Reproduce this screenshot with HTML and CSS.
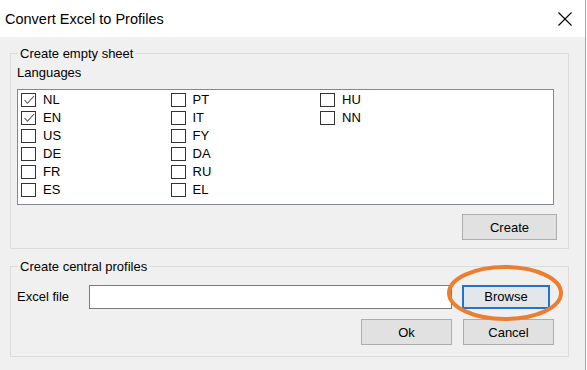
FILE: index.html
```html
<!DOCTYPE html>
<html>
<head>
<meta charset="utf-8">
<title>Convert Excel to Profiles</title>
<link rel="stylesheet" href="styles.css">
</head>
<body>
<div class="window">
  <div class="titlebar">
    <span class="title">Convert Excel to Profiles</span>
    <svg class="close" width="14" height="14" viewBox="0 0 14 14"><path d="M0.5 0.5 L13.5 13.5 M13.5 0.5 L0.5 13.5" stroke="#000" stroke-width="1.1" fill="none"/></svg>
  </div>
  <div class="client">
    <fieldset class="group group-empty">
      <legend class="legend">Create empty sheet</legend>
      <div class="label-languages">Languages</div>
      <div class="listbox">
        <div class="check-grid">
          <div class="item"><span class="box"><svg width="12" height="12" viewBox="0 0 12 12"><path d="M1.5 6 L4.5 9.3 L11 2" stroke="#555" stroke-width="1.1" fill="none"/></svg></span><span class="text">NL</span></div>
          <div class="item"><span class="box"><svg width="12" height="12" viewBox="0 0 12 12"><path d="M1.5 6 L4.5 9.3 L11 2" stroke="#555" stroke-width="1.1" fill="none"/></svg></span><span class="text">EN</span></div>
          <div class="item"><span class="box"></span><span class="text">US</span></div>
          <div class="item"><span class="box"></span><span class="text">DE</span></div>
          <div class="item"><span class="box"></span><span class="text">FR</span></div>
          <div class="item"><span class="box"></span><span class="text">ES</span></div>
          <div class="item"><span class="box"></span><span class="text">PT</span></div>
          <div class="item"><span class="box"></span><span class="text">IT</span></div>
          <div class="item"><span class="box"></span><span class="text">FY</span></div>
          <div class="item"><span class="box"></span><span class="text">DA</span></div>
          <div class="item"><span class="box"></span><span class="text">RU</span></div>
          <div class="item"><span class="box"></span><span class="text">EL</span></div>
          <div class="item"><span class="box"></span><span class="text">HU</span></div>
          <div class="item"><span class="box"></span><span class="text">NN</span></div>
        </div>
      </div>
      <div class="button-row">
        <button class="btn btn-create">Create</button>
      </div>
    </fieldset>
    <fieldset class="group group-central">
      <legend class="legend">Create central profiles</legend>
      <div class="file-row">
        <span class="file-label">Excel file</span>
        <span class="file-input"></span>
        <button class="btn btn-browse">Browse</button>
      </div>
      <div class="action-row">
        <button class="btn btn-ok">Ok</button>
        <button class="btn btn-cancel">Cancel</button>
      </div>
    </fieldset>
  </div>
  <svg class="highlight" width="130" height="70" viewBox="0 0 130 70"><ellipse cx="65" cy="35" rx="56" ry="26" fill="none" stroke="#ee7e2f" stroke-width="4"/></svg>
</div>
</body>
</html>
```

FILE: styles.css
```css
* { box-sizing: border-box; }
html, body { margin: 0; padding: 0; }
body {
  background: #ffffff;
  width: 587px;
  height: 370px;
  overflow: hidden;
  font-family: "Liberation Sans", Arial, sans-serif;
  font-size: 13px;
  color: #000;
}
.window {
  position: relative;
  width: 586px;
  height: 370px;
  border-right: 1px solid #a8a8a8;
  display: flex;
  flex-direction: column;
}
.titlebar {
  height: 37px;
  background: #fff;
  display: flex;
  align-items: center;
  padding: 0 13px 0 5px;
  flex: none;
}
.title {
  font-size: 14.5px;
}
.close {
  margin-left: auto;
  margin-top: 1px;
}
.client {
  flex: 1;
  background: #f0f0f0;
  padding: 9px 0 0 10px;
}
.group {
  width: 559px;
  margin: 0;
  border: 1px solid #dcdcdc;
  padding: 0 11px 0 6px;
}
.legend {
  padding: 0 2px;
  margin-left: 1px;
  line-height: 15px;
}
.group-empty {
  padding-top: 4px;
  padding-bottom: 8px;
}
.label-languages {
  line-height: 15px;
}
.listbox {
  margin-top: 9px;
  width: 537px;
  height: 116px;
  background: #fff;
  border: 1px solid #828790;
  padding: 3px 0 0 3px;
}
.check-grid {
  display: grid;
  grid-auto-flow: column;
  grid-template-rows: repeat(6, 18px);
  grid-auto-columns: 149.5px;
}
.item {
  display: flex;
  align-items: flex-start;
  line-height: 14px;
}
.box {
  width: 15px;
  height: 14px;
  border: 1px solid #333;
  background: #fff;
  display: flex;
  align-items: center;
  justify-content: center;
  flex: none;
}
.box svg { display: block; }
.text {
  margin-left: 7px;
}
.button-row {
  display: flex;
  justify-content: flex-end;
  margin-top: 9px;
}
.btn {
  font-family: inherit;
  font-size: 13px;
  color: #000;
  background: #e1e1e1;
  border: 1px solid #adadad;
  padding: 0;
  margin: 0;
  height: 26px;
}
.btn-create {
  width: 95px;
}
.group-central {
  margin-top: 10px;
  padding-top: 10px;
  padding-bottom: 11px;
}
.file-row {
  display: flex;
  align-items: center;
  height: 25px;
}
.file-label {
  width: 72px;
  flex: none;
}
.file-input {
  width: 363px;
  height: 24px;
  background: #fff;
  border: 1px solid #7a7a7a;
  flex: none;
  margin-top: 1px;
}
.btn-browse {
  margin-left: 10px;
  width: 88px;
  height: 24px;
  border: 2px solid #1f74cc;
  background: #e3e6ea;
}
.action-row {
  display: flex;
  justify-content: flex-end;
  gap: 11px;
  margin-top: 10px;
  padding-right: 3px;
}
.btn-ok, .btn-cancel {
  width: 91px;
}
.highlight {
  position: absolute;
  left: 440px;
  top: 258px;
}
```
